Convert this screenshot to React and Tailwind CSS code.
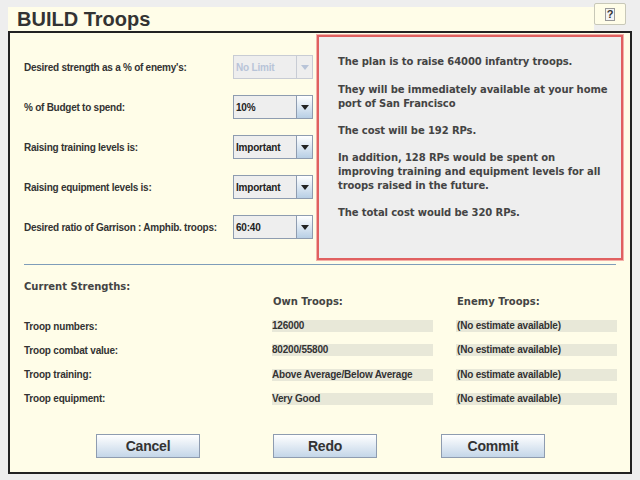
import React from 'react';

const CONTROLS = [
  { label: "Desired strength as a % of enemy's:", value: 'No Limit', disabled: true },
  { label: '% of Budget to spend:', value: '10%' },
  { label: 'Raising training levels is:', value: 'Important' },
  { label: 'Raising equipment levels is:', value: 'Important' },
  { label: 'Desired ratio of Garrison : Amphib. troops:', value: '60:40' },
];

const ROWS = [
  { label: 'Troop numbers:', own: '126000' },
  { label: 'Troop combat value:', own: '80200/55800' },
  { label: 'Troop training:', own: 'Above Average/Below Average' },
  { label: 'Troop equipment:', own: 'Very Good' },
];

const Combo = ({ value, disabled }) => (
  <div className={`flex w-[80px] h-[24px] shrink-0 border ${disabled ? 'border-[#c8ccd4]' : 'border-[#8e9cb0]'} bg-[#eeeeee]`}>
    <div className={`flex-1 flex items-center pl-[2px] text-[10px] font-bold tracking-[-0.2px] ${disabled ? 'text-[#b8c4d8]' : 'text-[#222]'}`}>
      {value}
    </div>
    <div className={`w-[16px] flex items-center justify-center border-l ${disabled ? 'border-[#c8ccd4] bg-[#eeeeee]' : 'border-[#8e9cb0] bg-gradient-to-b from-[#ffffff] to-[#b8cfe5]'}`}>
      <svg width="8" height="5" viewBox="0 0 8 5" aria-hidden="true">
        <path d="M0 0h8L4 5z" fill={disabled ? '#b8c4d8' : '#222'} />
      </svg>
    </div>
  </div>
);

const Btn = ({ children, className = '' }) => (
  <button className={`w-[104px] h-[24px] border border-[#8e9cb0] bg-gradient-to-b from-[#ffffff] to-[#c4d6e8] text-[14px] leading-[22px] font-bold text-[#333] font-['Liberation_Sans',Arial,sans-serif] tracking-[-0.2px] ${className}`}>
    {children}
  </button>
);

export default function App() {
  return (
    <div className="w-[640px] h-[480px] bg-[#eeeeee] font-['Liberation_Sans',Arial,sans-serif] text-[#333] overflow-hidden">
      <div className="ml-[8px] mr-[8px] pt-[3px] flex items-start">
        <div className="flex-1 mt-[4px] h-[24px] bg-[#fffde8] flex items-center pl-[9px]">
          <span className="text-[20px] font-bold text-[#333] leading-none">BUILD Troops</span>
        </div>
        <div className="w-[32px] h-[22px] mr-[6px] bg-[#fffde8] border border-[#c8c8b8] rounded-[2px] flex items-center justify-center">
          <span className="text-[11px] font-bold border border-[#999] px-[1px] leading-[11px] bg-[#f4f4f4]">?</span>
        </div>
      </div>
      <div className="mx-[8px] h-[443px] border-2 border-[#222] bg-[#fffde8] flex flex-col">
        <div className="flex">
          <div className="w-[305px] shrink-0 pl-[14px] pt-[22px] flex flex-col gap-[16px]">
            {CONTROLS.map((c) => (
              <div key={c.label} className="flex items-center h-[24px]">
                <span className="w-[209px] shrink-0 text-[10px] font-bold tracking-[-0.25px] text-[#333] whitespace-nowrap">{c.label}</span>
                <Combo value={c.value} disabled={c.disabled} />
              </div>
            ))}
          </div>
          <div className="ml-[2px] mt-[2px] w-[306px] h-[225px] border-2 border-[#e06060] outline outline-1 outline-[#f4b0a8] bg-[#eeeeee] pl-[19px] pt-[18px] pr-[4px] font-['DejaVu_Sans',sans-serif] text-[10px] font-bold leading-[14px] tracking-[-0.1px] text-[#444]">
            <p>The plan is to raise 64000 infantry troops.</p>
            <p className="mt-[14px]">They will be immediately available at your home port of San Francisco</p>
            <p className="mt-[13px]">The cost will be 192 RPs.</p>
            <p className="mt-[13px] whitespace-pre-line">In addition, 128 RPs would be spent on{'\n'}improving  training and equipment levels for all{'\n'}troops raised in the future.</p>
            <p className="mt-[13px]">The total cost would be 320 RPs.</p>
          </div>
        </div>
        <div className="mx-[14px] mt-[4px] h-px bg-[#7f9db9]" />
        <div className="pl-[14px] pr-[13px]">
          <div className="mt-[15px] text-[10px] leading-[14px] font-bold font-['DejaVu_Sans',sans-serif] text-[#444]">Current Strengths:</div>
          <div className="flex mt-[1px] text-[10px] leading-[14px] font-bold font-['DejaVu_Sans',sans-serif] text-[#444]">
            <span className="ml-[249px] w-[184px]">Own Troops:</span>
            <span>Enemy Troops:</span>
          </div>
          <div className="mt-[11px] flex flex-col gap-[12.3px]">
            {ROWS.map((r) => (
              <div key={r.label} className="flex items-center h-[12px] text-[10px] font-bold tracking-[-0.2px] text-[#333]">
                <span className="w-[248px]">{r.label}</span>
                <span className="w-[161px] h-[12px] bg-[#e8e8d8] leading-[12px]">{r.own}</span>
                <span className="w-[23px]" />
                <span className="flex-1 h-[12px] bg-[#e8e8d8] leading-[12px] pl-[1px]">(No estimate available)</span>
              </div>
            ))}
          </div>
        </div>
        <div className="mt-[29px] flex items-start pl-[86px]">
          <Btn>Cancel</Btn>
          <Btn className="ml-[73px]">Redo</Btn>
          <Btn className="ml-[64px]">Commit</Btn>
        </div>
      </div>
    </div>
  );
}
